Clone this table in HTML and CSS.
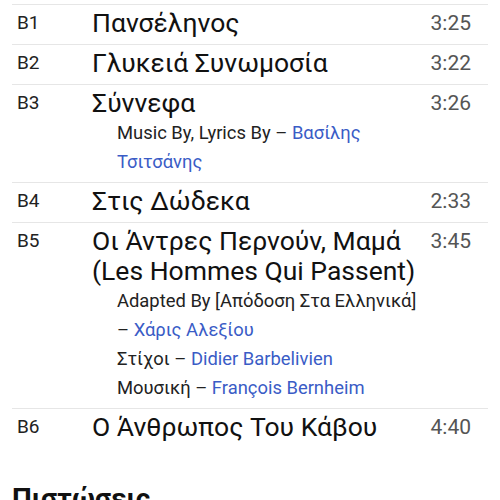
FILE: index.html
```html
<!DOCTYPE html>
<html lang="el">
<head>
  <meta charset="UTF-8">
  <meta name="viewport" content="width=device-width, initial-scale=1.0">
  <title>Tracklist</title>
  <link rel="stylesheet" href="styles.css">
</head>
<body>
  <div class="page">
    <div class="tracklist">
      <div class="track">
        <span class="pos">B1</span>
        <div class="info"><div class="title">Πανσέληνος</div></div>
        <span class="dur">3:25</span>
      </div>
      <div class="track">
        <span class="pos">B2</span>
        <div class="info"><div class="title">Γλυκειά Συνωμοσία</div></div>
        <span class="dur">3:22</span>
      </div>
      <div class="track">
        <span class="pos">B3</span>
        <div class="info">
          <div class="title">Σύννεφα</div>
          <div class="credits">
            <p>Music By, Lyrics By – <a href="#">Βασίλης Τσιτσάνης</a></p>
          </div>
        </div>
        <span class="dur">3:26</span>
      </div>
      <div class="track">
        <span class="pos">B4</span>
        <div class="info"><div class="title">Στις Δώδεκα</div></div>
        <span class="dur">2:33</span>
      </div>
      <div class="track">
        <span class="pos">B5</span>
        <div class="info">
          <div class="title">Οι Άντρες Περνούν, Μαμά (Les Hommes Qui Passent)</div>
          <div class="credits">
            <p>Adapted By [Απόδοση Στα Ελληνικά] – <a href="#">Χάρις Αλεξίου</a></p>
            <p>Στίχοι – <a href="#">Didier Barbelivien</a></p>
            <p>Μουσική – <a href="#">François Bernheim</a></p>
          </div>
        </div>
        <span class="dur">3:45</span>
      </div>
      <div class="track">
        <span class="pos">B6</span>
        <div class="info"><div class="title">Ο Άνθρωπος Του Κάβου</div></div>
        <span class="dur">4:40</span>
      </div>
    </div>

    <h2 class="section">Πιστώσεις</h2>
  </div>
</body>
</html>
```

FILE: styles.css
```css
body {
  margin: 0;
  background: #fff;
  color: #111;
  font-family: Roboto, "Noto Sans", sans-serif;
}
.page {
  padding: 4px 12px 0;
}
.track {
  display: grid;
  grid-template-columns: 69px minmax(0, 1fr) 42px;
  column-gap: 6px;
  align-items: start;
  padding: 3px 17px 6px 5px;
  border-top: 1px solid #e6e6e6;
}
.pos {
  font-size: 19px;
  line-height: 30px;
  color: #222;
}
.title {
  font-size: 26.5px;
  line-height: 30px;
  color: #111;
}
.dur {
  font-size: 21px;
  line-height: 30px;
  color: #555;
  text-align: right;
  white-space: nowrap;
}
.credits {
  padding-left: 25px;
  font-size: 18.4px;
  line-height: 29px;
  color: #222;
}
.credits p {
  margin: 0;
}
.credits a {
  color: #3a5cc6;
  text-decoration: none;
}
.section {
  margin: 34px 0 0;
  font-size: 28px;
  font-weight: 700;
  color: #111;
}
```
